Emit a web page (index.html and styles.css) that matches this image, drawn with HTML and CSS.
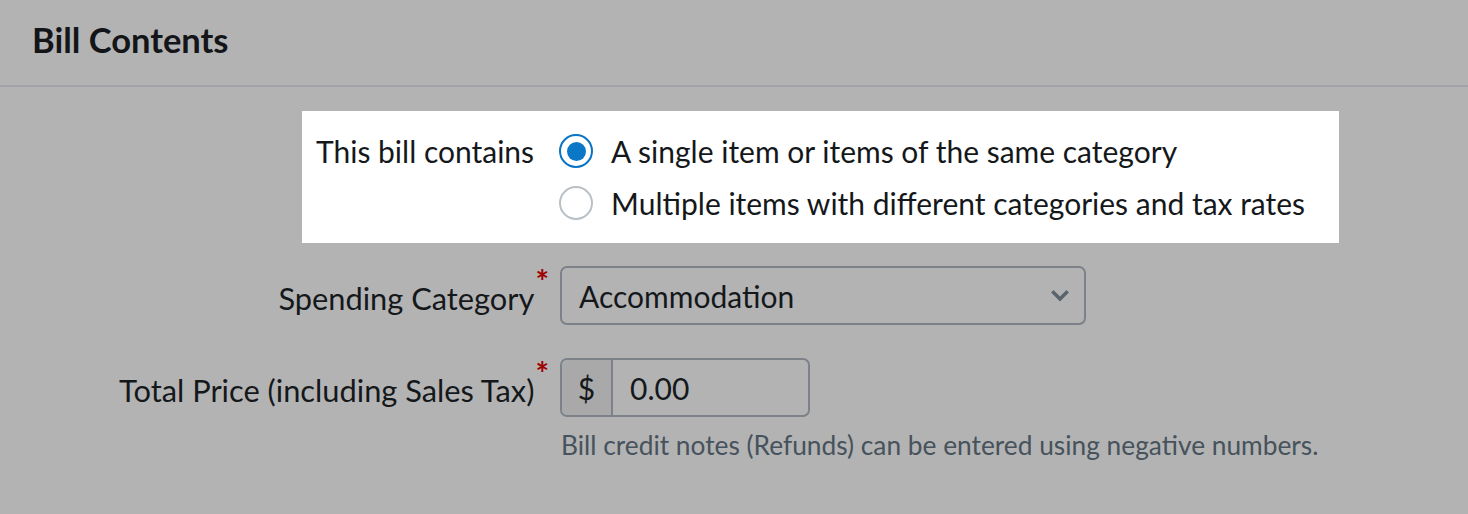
FILE: index.html
```html
<!DOCTYPE html>
<html lang="en">
<head>
<meta charset="utf-8">
<title>Bill Contents</title>
<link rel="stylesheet" href="styles.css">
</head>
<body>
<section class="panel">
  <header class="panel-header">
    <h2 class="panel-title">Bill Contents</h2>
  </header>
  <div class="panel-body">
    <div class="highlight-row">
      <div class="hl-label">This bill contains</div>
      <div class="radio-list">
        <label class="radio-item">
          <span class="radio radio-checked"><span class="radio-dot"></span></span>
          <span class="radio-text">A single item or items of the same category</span>
        </label>
        <label class="radio-item">
          <span class="radio"></span>
          <span class="radio-text">Multiple items with different categories and tax rates</span>
        </label>
      </div>
    </div>

    <div class="form-row row-select">
      <div class="form-label"><span class="label-text">Spending Category</span><span class="req">*</span></div>
      <div class="form-control">
        <div class="select">
          <span class="select-value">Accommodation</span>
          <svg class="chevron" width="18" height="12" viewBox="0 0 18 12"><path d="M2.5 2.5 L9 9 L15.5 2.5" fill="none" stroke="#59636b" stroke-width="3.4" stroke-linecap="square"/></svg>
        </div>
      </div>
    </div>

    <div class="form-row row-price">
      <div class="form-label"><span class="label-text">Total Price (including Sales Tax)</span><span class="req">*</span></div>
      <div class="form-control">
        <div class="input-group">
          <span class="addon">$</span>
          <span class="input-value">0.00</span>
        </div>
        <p class="help">Bill credit notes (Refunds) can be entered using negative numbers.</p>
      </div>
    </div>
  </div>
</section>
</body>
</html>
```

FILE: styles.css
```css
html, body {
  margin: 0;
  padding: 0;
}
body {
  background: #b3b3b3;
  font-family: "Lato", "Noto Sans", sans-serif;
  color: #15181b;
  width: 1468px;
  height: 514px;
  overflow: hidden;
}
.panel-header {
  height: 87px;
  border-bottom: 2px solid #a3a3a7;
  display: flex;
  align-items: center;
  padding-left: 32px;
  box-sizing: border-box;
}
.panel-title {
  margin: 0;
  font-size: 34.5px;
  font-weight: 700;
  color: #131518;
  position: relative;
  top: -3px;
}
.panel-body {
  padding-top: 24px;
}
.highlight-row {
  margin-left: 302px;
  width: 1037px;
  box-sizing: border-box;
  background: #ffffff;
  display: flex;
  gap: 25px;
  padding: 23px 0 23px 14px;
  font-size: 30px;
}
.hl-label {
  line-height: 34px;
  white-space: nowrap;
}
.radio-list {
  display: flex;
  flex-direction: column;
  gap: 18px;
}
.radio-item {
  display: flex;
  align-items: center;
  gap: 18px;
  height: 34px;
  line-height: 34px;
  white-space: nowrap;
}
.radio {
  width: 34px;
  height: 34px;
  box-sizing: border-box;
  border-radius: 50%;
  border: 2px solid #b9c0c6;
  display: flex;
  align-items: center;
  justify-content: center;
  flex: none;
}
.radio-checked {
  border: 2.5px solid #0a74c4;
}
.radio-dot {
  width: 19px;
  height: 19px;
  border-radius: 50%;
  background: #0a78c6;
}
.form-row {
  display: flex;
  gap: 25px;
  font-size: 30px;
}
.row-select {
  margin-top: 23px;
}
.row-price {
  margin-top: 33px;
}
.form-label {
  width: 535px;
  flex: none;
  text-align: right;
  padding-top: 14px;
  box-sizing: border-box;
  white-space: nowrap;
  font-size: 30.8px;
}
.req {
  color: #a00000;
  font-size: 32px;
  font-weight: 700;
  line-height: 1;
  vertical-align: top;
  position: relative;
  top: -14px;
  left: 1px;
  margin-right: -13px;
}
.select {
  width: 526px;
  height: 59px;
  box-sizing: border-box;
  border: 2px solid #7c8288;
  border-radius: 7px;
  display: flex;
  align-items: center;
  justify-content: space-between;
  padding: 0 15px 0 17px;
}
.input-group {
  width: 250px;
  height: 59px;
  box-sizing: border-box;
  border: 2px solid #7c8288;
  border-radius: 7px;
  display: flex;
  overflow: hidden;
}
.addon {
  width: 49px;
  flex: none;
  background: #a9a9a9;
  border-right: 2px solid #7c8288;
  display: flex;
  align-items: center;
  justify-content: center;
}
.input-value {
  display: flex;
  align-items: center;
  padding-left: 17px;
}
.help {
  margin: 12px 0 0 1px;
  font-size: 26.3px;
  color: #46525c;
}
```
